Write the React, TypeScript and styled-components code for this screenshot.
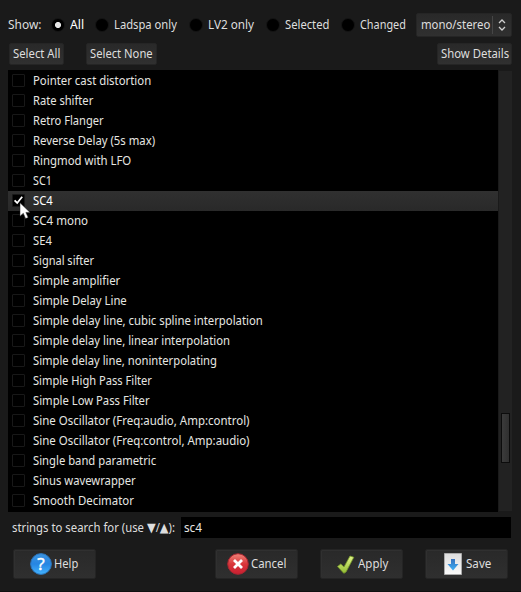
import React, { useLayoutEffect, useRef, useState } from "react";
import styled, { createGlobalStyle } from "styled-components";

const Global = createGlobalStyle`
  * { box-sizing: border-box; }
  body { margin: 0; background: #1a1a1a; overflow: hidden; }
`;

const Window = styled.main`
  width: 521px;
  height: 592px;
  padding: 13px 9px 0 8px;
  background: #1a1a1a;
  border-bottom: 1px solid #101010;
  color: #dedede;
  font: 13px/18px "Noto Sans", "DejaVu Sans", sans-serif;
  display: flex;
  flex-direction: column;
  cursor: default;
`;

const FitBox = styled.span<{ $w: number }>`
  display: block;
  flex: none;
  width: ${(p) => p.$w}px;
  height: 20px;
  white-space: pre;
`;
const FitInner = styled.span`
  display: inline-block;
  transform-origin: 0 50%;
`;

/* Condenses a text run so that it fills the given width. */
function Fit({ w, children }: { w: number; children: React.ReactNode }) {
  const ref = useRef<HTMLSpanElement>(null);
  const [scale, setScale] = useState(1);
  useLayoutEffect(() => {
    if (ref.current) setScale(w / ref.current.offsetWidth);
  }, [w]);
  return (
    <FitBox $w={w}>
      <FitInner ref={ref} style={{ transform: `scaleX(${scale})` }}>{children}</FitInner>
    </FitBox>
  );
}

const FilterBar = styled.div`
  display: flex;
  align-items: center;
  height: 24px;
`;
const Option = styled.label<{ $gap: number; $on?: boolean }>`
  display: flex;
  align-items: center;
  gap: 5px;
  margin-left: ${(p) => p.$gap}px;
  color: ${(p) => (p.$on ? "#fff" : "#dedede")};
`;
const Radio = styled.span<{ $on?: boolean }>`
  width: 14px;
  height: 14px;
  border-radius: 50%;
  border: 1px solid #141414;
  background: ${(p) => (p.$on ? "radial-gradient(circle, #e6e6e6 2.6px, #000 3.5px)" : "#000")};
`;
const Select = styled.div`
  display: flex;
  align-items: center;
  width: 96px;
  height: 24px;
  margin-left: auto;
  padding-left: 4px;
  border: 1px solid #252525;
  border-radius: 2px;
  background: linear-gradient(#292929, #303030);
`;
const Divider = styled.span`
  width: 1px;
  height: 18px;
  margin: 0 4px 0 2px;
  background: #464646;
`;

const ActionBar = styled.div`
  display: flex;
  margin-top: 6px;
  height: 27px;
  padding-left: 1px;
`;
const SmallButton = styled.div<{ $w: number; $gap?: number; $end?: boolean }>`
  display: flex;
  align-items: center;
  width: ${(p) => p.$w}px;
  height: 22px;
  padding-left: 3px;
  margin-left: ${(p) => (p.$end ? "auto" : `${p.$gap || 0}px`)};
  border: 1px solid #252525;
  border-radius: 2px;
  background: linear-gradient(#292929, #303030);
`;

const ListPane = styled.div`
  display: flex;
  height: 442px;
`;
const List = styled.ul`
  width: 490px;
  margin: 0;
  padding: 1px 0;
  list-style: none;
  background: #000;
`;
const Row = styled.li<{ $on?: boolean }>`
  display: flex;
  align-items: center;
  height: 20px;
  padding-left: 4px;
  color: ${(p) => (p.$on ? "#fff" : "#e6e6e2")};
  background: ${(p) => (p.$on ? "linear-gradient(#303030, #292929)" : "transparent")};
`;
const Check = styled.span`
  position: relative;
  width: 13px;
  height: 13px;
  margin: 0 8px 1px 0;
  border: 1px solid #181818;
  border-radius: 1px;
  background: #000;
`;
const Tick = styled.svg`
  position: absolute;
  left: 0;
  top: 0;
`;
const Pointer = styled.svg`
  position: absolute;
  left: 6px;
  top: 7px;
  z-index: 2;
`;
const Track = styled.div`
  width: 13px;
  height: 440px;
  margin: 1px 0 0 1px;
  padding: 342px 2px 0;
  background: #222;
`;
const Thumb = styled.div`
  height: 50px;
  border: 1px solid #0c0c0c;
  background: linear-gradient(90deg, #3b3b3b, #303030);
`;

const SearchBar = styled.div`
  display: flex;
  align-items: center;
  height: 21px;
  margin-top: 5px;
  padding-left: 4px;
`;
const SearchField = styled.div`
  display: flex;
  align-items: center;
  width: 330px;
  height: 21px;
  margin-left: 6px;
  padding-left: 3px;
  background: #000;
  color: #e6e6e2;
`;

const Footer = styled.footer`
  display: flex;
  margin: 11px 0 0 5px;
`;
const BigButton = styled.div<{ $pad: number; $gap?: number }>`
  display: flex;
  align-items: center;
  width: 83px;
  height: 30px;
  margin-left: ${(p) => p.$gap || 0}px;
  padding-left: ${(p) => p.$pad}px;
  border: 1px solid #242424;
  border-radius: 2px;
  background: linear-gradient(#292929, #2f2f2f);
  box-shadow: inset 1px 1px 0 #303030;
`;
const Icon = styled.svg<{ $gap: number }>`
  flex: none;
  overflow: visible;
  margin-right: ${(p) => p.$gap}px;
`;
const BadgeMark = styled.text`
  font: 17px "Noto Sans", sans-serif;
  fill: #fff;
  stroke: #fff;
  stroke-width: 0.4px;
`;

const plugins: [string, number][] = [
  ["Pointer cast distortion", 118],
  ["Rate shifter", 60],
  ["Retro Flanger", 71],
  ["Reverse Delay (5s max)", 122],
  ["Ringmod with LFO", 98],
  ["SC1", 19],
  ["SC4", 20],
  ["SC4 mono", 55],
  ["SE4", 19],
  ["Signal sifter", 61],
  ["Simple amplifier", 87],
  ["Simple Delay Line", 94],
  ["Simple delay line, cubic spline interpolation", 230],
  ["Simple delay line, linear interpolation", 197],
  ["Simple delay line, noninterpolating", 184],
  ["Simple High Pass Filter", 119],
  ["Simple Low Pass Filter", 117],
  ["Sine Oscillator (Freq:audio, Amp:control)", 217],
  ["Sine Oscillator (Freq:control, Amp:audio)", 217],
  ["Single band parametric", 123],
  ["Sinus wavewrapper", 103],
  ["Smooth Decimator", 101],
];

const filters: [string, number, number][] = [
  ["All", 14, 10],
  ["Ladspa only", 63, 11],
  ["LV2 only", 46, 12],
  ["Selected", 44, 12],
  ["Changed", 46, 12],
];

export default function App() {
  return (
    <>
      <Global />
      <Window>
        <FilterBar>
          <Fit w={33}>Show:</Fit>
          {filters.map(([name, w, gap], i) => (
            <Option key={name} $gap={gap} $on={i === 0}>
              <Radio $on={i === 0} />
              <Fit w={w}>{name}</Fit>
            </Option>
          ))}
          <Select>
            <Fit w={69}>mono/stereo</Fit>
            <Divider />
            <svg width="10" height="14" viewBox="0 0 10 14" fill="none" stroke="#cfcfcf" strokeWidth="1.3">
              <path d="M2 5 5 2 8 5M2 9 5 12 8 9" />
            </svg>
          </Select>
        </FilterBar>
        <ActionBar>
          <SmallButton $w={55}><Fit w={47}>Select All</Fit></SmallButton>
          <SmallButton $w={71} $gap={22}><Fit w={63}>Select None</Fit></SmallButton>
          <SmallButton $w={75} $end><Fit w={68}>Show Details</Fit></SmallButton>
        </ActionBar>
        <ListPane>
          <List>
            {plugins.map(([name, w]) => {
              const on = name === "SC4";
              return (
                <Row key={name} $on={on}>
                  <Check>
                    {on && (
                      <>
                        <Tick width="11" height="11" viewBox="0 0 11 11">
                          <path d="M1.6 5.4 4.2 8 9.2 1.8" fill="none" stroke="#fff" strokeWidth="1.8" />
                        </Tick>
                        <Pointer width="14" height="19" viewBox="0 0 14 19">
                          <path d="M1 .8V14.2L4.3 11.3 6.6 16.6 9.2 15.5 6.9 10.4H11Z" fill="#fff" stroke="#222" strokeWidth=".5" />
                        </Pointer>
                      </>
                    )}
                  </Check>
                  <Fit w={w}>{name}</Fit>
                </Row>
              );
            })}
          </List>
          <Track><Thumb /></Track>
        </ListPane>
        <SearchBar>
          <Fit w={163}>strings to search for (use ▼/▲):</Fit>
          <SearchField><Fit w={18}>sc4</Fit></SearchField>
        </SearchBar>
        <Footer>
          <BigButton $pad={16}>
            <Icon $gap={2} width="22" height="22" viewBox="0 0 22 22">
              <defs>
                <linearGradient id="blue" x2="0" y2="1"><stop stopColor="#3c94e0" /><stop offset=".5" stopColor="#2685e2" /><stop offset="1" stopColor="#43b4ff" /></linearGradient>
              </defs>
              <circle cx="11" cy="11" r="10.4" fill="url(#blue)" stroke="#2c74b8" />
              <BadgeMark x="11" y="17" textAnchor="middle">?</BadgeMark>
            </Icon>
            <Fit w={24}>Help</Fit>
          </BigButton>
          <BigButton $pad={11} $gap={119}>
            <Icon $gap={2} width="22" height="22" viewBox="0 0 22 22">
              <defs>
                <linearGradient id="red" x2="0" y2="1"><stop stopColor="#f08379" /><stop offset=".5" stopColor="#d9363a" /><stop offset="1" stopColor="#c91f31" /></linearGradient>
              </defs>
              <circle cx="11" cy="11" r="10.3" fill="url(#red)" stroke="#a92530" />
              <path d="m7 7 8 8m0-8-8 8" stroke="#fff" strokeWidth="2.8" />
            </Icon>
            <Fit w={35}>Cancel</Fit>
          </BigButton>
          <BigButton $pad={15} $gap={22}>
            <Icon $gap={2} width="20" height="22" viewBox="0 0 20 22">
              <defs>
                <linearGradient id="green" x2="0" y2="1"><stop stopColor="#e3f48c" /><stop offset="1" stopColor="#92bb32" /></linearGradient>
              </defs>
              <path d="M1.5 13.5 4.8 11 8 14 14 3 17.8 4.3 10 19 7.8 20.3Z" fill="url(#green)" stroke="#769b28" strokeWidth=".8" strokeLinejoin="round" />
            </Icon>
            <Fit w={30}>Apply</Fit>
          </BigButton>
          <BigButton $pad={18} $gap={22}>
            <Icon $gap={4} width="18" height="22" viewBox="0 0 18 22">
              <defs>
                <linearGradient id="page" x2="0" y2="1"><stop stopColor="#ddd" /><stop offset="1" stopColor="#fafafa" /></linearGradient>
                <linearGradient id="arrow" x2="0" y2="1"><stop stopColor="#3571bd" /><stop offset="1" stopColor="#3eaff5" /></linearGradient>
              </defs>
              <path d="M.5.5h17v21H.5Z" fill="url(#page)" stroke="#aaa" />
              <path d="M7 6h4v5h3.5L9 17.5 3.5 11H7Z" fill="url(#arrow)" />
            </Icon>
            <Fit w={25}>Save</Fit>
          </BigButton>
        </Footer>
      </Window>
    </>
  );
}
